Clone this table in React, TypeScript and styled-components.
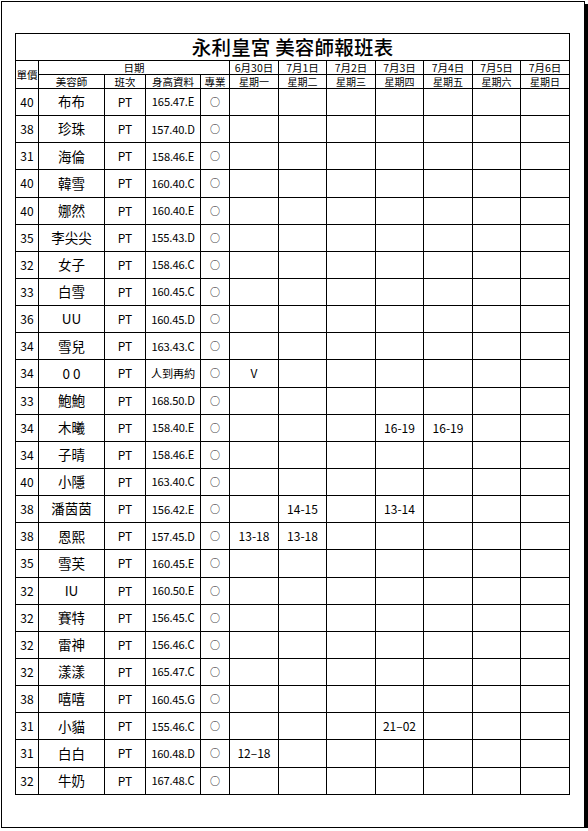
import React from "react";
import styled, { createGlobalStyle } from "styled-components";

const GlobalStyle = createGlobalStyle`
  html, body {
    margin: 0;
    padding: 0;
    background: #fff;
  }
  body {
    font-family: "Noto Sans CJK TC", "Noto Sans", sans-serif;
    color: #000;
  }
`;

const Frame = styled.div`
  box-sizing: border-box;
  margin: 1px 0 0 1px;
  width: 584px;
  height: 827px;
  border: 1px solid #000;
  box-shadow: 3px 3px 0 #000;
  padding: 31px 0 0 13px;
`;

const Sheet = styled.table`
  border-collapse: collapse;
  table-layout: fixed;
  width: 554px;
  font-family: "Noto Sans CJK TC", sans-serif;

  td,
  th {
    border: 1px solid #000;
    padding: 0;
    text-align: center;
    vertical-align: middle;
    overflow: hidden;
    white-space: nowrap;
    font-weight: 400;
  }
`;

const TitleCell = styled.th`
  height: 26px;
  font-size: 19.5px;
  font-weight: 500 !important;
  line-height: 26px;
  letter-spacing: 0.2px;
`;

const HeadCell = styled.th<{ $small?: boolean }>`
  height: 13px;
  font-size: ${(p) => (p.$small ? "10px" : "10.5px")};
  line-height: 12px;
`;

const Row = styled.tr`
  height: 27.15px;
`;

type CellKind = "price" | "name" | "shift" | "height" | "pro" | "slot";

const sizes: Record<CellKind, string> = {
  price: "12px",
  name: "13.5px",
  shift: "12px",
  height: "11.2px",
  pro: "10px",
  slot: "12px",
};

const Cell = styled.td<{ $kind: CellKind }>`
  font-size: ${(p) => sizes[p.$kind]};
  line-height: 1;
  letter-spacing: ${(p) => (p.$kind === "height" ? "-0.2px" : "0")};
`;

const widths = [23, 66, 41, 55, 29, 49, 48, 49, 48, 49, 48, 49];

const days = [
  { date: "6月30日", week: "星期一" },
  { date: "7月1日", week: "星期二" },
  { date: "7月2日", week: "星期三" },
  { date: "7月3日", week: "星期四" },
  { date: "7月4日", week: "星期五" },
  { date: "7月5日", week: "星期六" },
  { date: "7月6日", week: "星期日" },
];

type Staff = {
  price: number;
  name: string;
  info: string;
  slots?: Record<number, string>;
};

const staff: Staff[] = [
  { price: 40, name: "布布", info: "165.47.E" },
  { price: 38, name: "珍珠", info: "157.40.D" },
  { price: 31, name: "海倫", info: "158.46.E" },
  { price: 40, name: "韓雪", info: "160.40.C" },
  { price: 40, name: "娜然", info: "160.40.E" },
  { price: 35, name: "李尖尖", info: "155.43.D" },
  { price: 32, name: "女子", info: "158.46.C" },
  { price: 33, name: "白雪", info: "160.45.C" },
  { price: 36, name: "UU", info: "160.45.D" },
  { price: 34, name: "雪兒", info: "163.43.C" },
  { price: 34, name: "0 0", info: "人到再約", slots: { 0: "V" } },
  { price: 33, name: "鮑鮑", info: "168.50.D" },
  { price: 34, name: "木曦", info: "158.40.E", slots: { 3: "16-19", 4: "16-19" } },
  { price: 34, name: "子晴", info: "158.46.E" },
  { price: 40, name: "小隱", info: "163.40.C" },
  { price: 38, name: "潘茵茵", info: "156.42.E", slots: { 1: "14-15", 3: "13-14" } },
  { price: 38, name: "恩熙", info: "157.45.D", slots: { 0: "13-18", 1: "13-18" } },
  { price: 35, name: "雪芙", info: "160.45.E" },
  { price: 32, name: "IU", info: "160.50.E" },
  { price: 32, name: "賽特", info: "156.45.C" },
  { price: 32, name: "雷神", info: "156.46.C" },
  { price: 32, name: "漾漾", info: "165.47.C" },
  { price: 38, name: "嘻嘻", info: "160.45.G" },
  { price: 31, name: "小貓", info: "155.46.C", slots: { 3: "21–02" } },
  { price: 31, name: "白白", info: "160.48.D", slots: { 0: "12–18" } },
  { price: 32, name: "牛奶", info: "167.48.C" },
];

export default function App() {
  return (
    <>
      <GlobalStyle />
      <Frame>
        <Sheet>
          <colgroup>
            {widths.map((w, i) => (
              <col key={i} style={{ width: w }} />
            ))}
          </colgroup>
          <thead>
            <tr>
              <TitleCell colSpan={12}>永利皇宮 美容師報班表</TitleCell>
            </tr>
            <tr>
              <HeadCell rowSpan={2}>單價</HeadCell>
              <HeadCell colSpan={4}>日期</HeadCell>
              {days.map((d) => (
                <HeadCell key={d.date}>{d.date}</HeadCell>
              ))}
            </tr>
            <tr>
              <HeadCell>美容師</HeadCell>
              <HeadCell>班次</HeadCell>
              <HeadCell>身高資料</HeadCell>
              <HeadCell>專業</HeadCell>
              {days.map((d) => (
                <HeadCell key={d.week} $small>
                  {d.week}
                </HeadCell>
              ))}
            </tr>
          </thead>
          <tbody>
            {staff.map((s, i) => (
              <Row key={i}>
                <Cell $kind="price">{s.price}</Cell>
                <Cell $kind="name">{s.name}</Cell>
                <Cell $kind="shift">PT</Cell>
                <Cell $kind="height">{s.info}</Cell>
                <Cell $kind="pro">○</Cell>
                {days.map((d, j) => (
                  <Cell key={d.date} $kind="slot">
                    {s.slots?.[j] ?? ""}
                  </Cell>
                ))}
              </Row>
            ))}
          </tbody>
        </Sheet>
      </Frame>
    </>
  );
}
